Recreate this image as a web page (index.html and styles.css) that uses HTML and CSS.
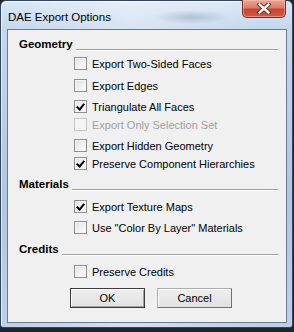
FILE: index.html
```html
<!DOCTYPE html>
<html lang="en">
<head>
    <meta charset="UTF-8">
    <title>DAE Export Options</title>
    <link rel="stylesheet" href="styles.css">
</head>
<body>
<div class="window">
    <div class="titlebar">
        <span class="title">DAE Export Options</span>
        <span class="close">
            <svg width="14" height="11" viewBox="0 0 14 11">
                <path d="M2.5 1.5 L11.5 9.5 M11.5 1.5 L2.5 9.5" stroke="#5a2418" stroke-width="4.2" stroke-linecap="square"/>
                <path d="M2.5 1.5 L11.5 9.5 M11.5 1.5 L2.5 9.5" stroke="#fff" stroke-width="2.4" stroke-linecap="square"/>
            </svg>
        </span>
    </div>

    <div class="client">
        <div class="group_head">Geometry</div>
        <div class="opt m1"><span class="box"></span>Export Two-Sided Faces</div>
        <div class="opt m1"><span class="box"></span>Export Edges</div>
        <div class="opt"><span class="box checked"></span>Triangulate All Faces</div>
        <div class="opt up disabled"><span class="box"></span>Export Only Selection Set</div>
        <div class="opt"><span class="box"></span>Export Hidden Geometry</div>
        <div class="opt up"><span class="box checked"></span>Preserve Component Hierarchies</div>

        <div class="group_head m2">Materials</div>
        <div class="opt m4"><span class="box checked"></span>Export Texture Maps</div>
        <div class="opt"><span class="box"></span>Use "Color By Layer" Materials</div>

        <div class="group_head m3">Credits</div>
        <div class="opt m4"><span class="box"></span>Preserve Credits</div>

        <div class="buttons">
            <span class="btn default">OK</span>
            <span class="btn">Cancel</span>
        </div>
    </div>
</div>
</body>
</html>
```

FILE: styles.css
```css
body {
    margin: 0;
    padding: 0;
    background: #1f252d;
    font-family: "Liberation Sans", Arial, sans-serif;
    font-size: 11px;
    color: #000;
}

.window {
    width: 293px;
    height: 328px;
    box-sizing: border-box;
    border: 1px solid #34445a;
    border-radius: 6px 6px 3px 3px;
    background:
        radial-gradient(ellipse 38px 7px at 190px 16px, rgba(110, 130, 160, 0.35), transparent),
        linear-gradient(90deg, rgba(255, 255, 255, 0) 0, rgba(255, 255, 255, 0.35) 45%, rgba(255, 255, 255, 0) 90%),
        linear-gradient(#d9e7f5, #c3d7ed 28px, #afc6e2 60%, #bcd0e8);
    box-shadow: inset 1px 1px 0 rgba(255, 255, 255, 0.6);
}

.titlebar {
    height: 28px;
    display: flex;
    align-items: flex-start;
    justify-content: space-between;
}

.title {
    padding: 10px 0 0 7px;
    font-size: 11.5px;
    color: #000;
}

.close {
    width: 44px;
    height: 18px;
    box-sizing: border-box;
    margin: -1px 6px 0 0;
    border: 1px solid #7a2a1f;
    border-top: 0;
    border-radius: 0 0 5px 5px;
    background: linear-gradient(#e9a898, #dc7c68 45%, #c8452f 55%, #cf5a40);
    box-shadow: inset 0 0 0 1px rgba(255, 200, 190, 0.5);
    display: flex;
    align-items: center;
    justify-content: center;
}

.client {
    margin: 0 0 0 6px;
    width: 280px;
    height: 294px;
    box-sizing: border-box;
    border: 1px solid #6b7b8f;
    background: #f0f0f0;
    padding-top: 6px;
}

.group_head {
    height: 16px;
    line-height: 16px;
    display: flex;
    padding: 0 8px 0 11px;
    font-weight: bold;
    font-size: 11.5px;
}

.group_head::after {
    content: "";
    flex: 1;
    align-self: flex-start;
    margin: 13px 0 0 3px;
    border-top: 1px solid #a0a0a0;
    border-bottom: 1px solid #fff;
}

.opt {
    height: 21px;
    display: flex;
    align-items: center;
    padding-left: 66px;
}

.opt.m1 { margin-top: 1px; }
.group_head.m2 { margin-top: 2px; }
.group_head.m3 { margin-top: 3px; }
.opt.m4 { margin-top: 4px; }
.opt.up { margin-top: -3px; }

.opt.disabled {
    color: #a0a0a0;
}

.box {
    width: 13px;
    height: 13px;
    box-sizing: border-box;
    margin-right: 5px;
    border: 1px solid #8e8f8f;
    background: linear-gradient(135deg, #e2e2e2, #fdfdfd);
    box-shadow: inset 0 0 0 1px #f6f6f6;
    position: relative;
}

.disabled .box {
    border-color: #c6c6c6;
    background: #f4f4f4;
}

.box.checked::after {
    content: "";
    position: absolute;
    left: 3px;
    top: 1px;
    width: 3px;
    height: 6px;
    border: solid #000;
    border-width: 0 2px 2px 0;
    transform: rotate(40deg);
}

.buttons {
    margin-top: 6px;
    padding-left: 62px;
    display: flex;
    gap: 12px;
}

.btn {
    width: 75px;
    height: 20px;
    box-sizing: border-box;
    display: flex;
    align-items: center;
    justify-content: center;
    border: 1px solid #adadad;
    border-right-color: #707070;
    border-bottom-color: #707070;
    background: linear-gradient(#eeeeee, #e2e2e2);
    box-shadow: inset 1px 1px 0 #fff;
}

.btn.default {
    border-color: #3c3c3c;
    box-shadow: inset 1px 1px 0 #fff, inset -1px -1px 0 #a0a0a0;
}
```
